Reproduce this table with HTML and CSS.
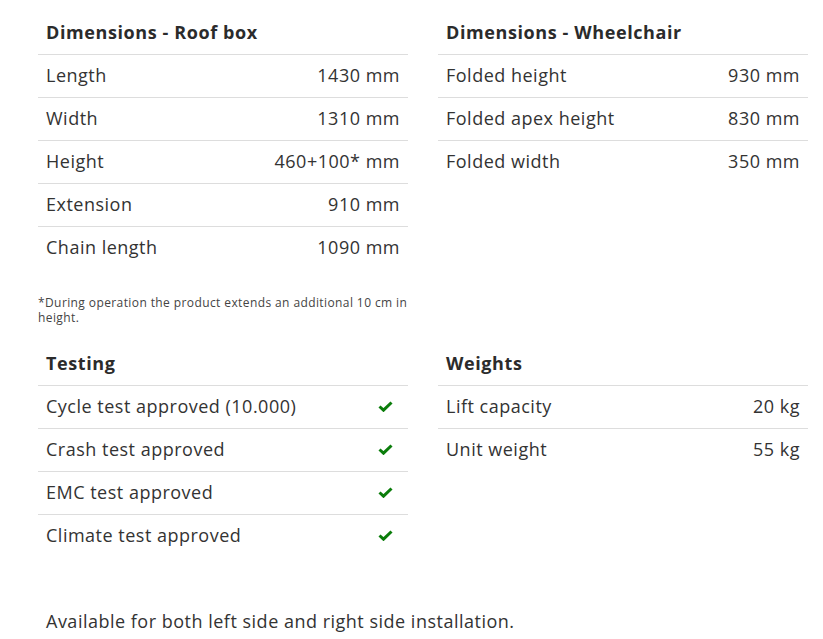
FILE: index.html
```html
<!DOCTYPE html>
<html>
<head>
<meta charset="utf-8">
<link rel="stylesheet" href="styles.css">
</head>
<body>
<div class="page">
  <div class="grid">
    <div class="col">
      <table class="spec">
        <tr class="head"><th colspan="2">Dimensions - Roof box</th></tr>
        <tr><td>Length</td><td class="val">1430 mm</td></tr>
        <tr><td>Width</td><td class="val">1310 mm</td></tr>
        <tr><td>Height</td><td class="val">460+100* mm</td></tr>
        <tr><td>Extension</td><td class="val">910 mm</td></tr>
        <tr><td>Chain length</td><td class="val">1090 mm</td></tr>
      </table>
      <p class="note">*During operation the product extends an additional 10 cm in height.</p>
    </div>
    <div class="col">
      <table class="spec">
        <tr class="head"><th colspan="2">Dimensions - Wheelchair</th></tr>
        <tr><td>Folded height</td><td class="val">930 mm</td></tr>
        <tr><td>Folded apex height</td><td class="val">830 mm</td></tr>
        <tr><td>Folded width</td><td class="val">350 mm</td></tr>
      </table>
    </div>
    <div class="col">
      <table class="spec">
        <tr class="head"><th colspan="2">Testing</th></tr>
        <tr><td>Cycle test approved (10.000)</td><td class="chk"><svg viewBox="0 0 15 11" width="15" height="11"><path d="M1.5 5.5 L5.5 9.2 L13.5 1.5" fill="none" stroke="#0b7d0b" stroke-width="3"/></svg></td></tr>
        <tr><td>Crash test approved</td><td class="chk"><svg viewBox="0 0 15 11" width="15" height="11"><path d="M1.5 5.5 L5.5 9.2 L13.5 1.5" fill="none" stroke="#0b7d0b" stroke-width="3"/></svg></td></tr>
        <tr><td>EMC test approved</td><td class="chk"><svg viewBox="0 0 15 11" width="15" height="11"><path d="M1.5 5.5 L5.5 9.2 L13.5 1.5" fill="none" stroke="#0b7d0b" stroke-width="3"/></svg></td></tr>
        <tr><td>Climate test approved</td><td class="chk"><svg viewBox="0 0 15 11" width="15" height="11"><path d="M1.5 5.5 L5.5 9.2 L13.5 1.5" fill="none" stroke="#0b7d0b" stroke-width="3"/></svg></td></tr>
      </table>
    </div>
    <div class="col">
      <table class="spec">
        <tr class="head"><th colspan="2">Weights</th></tr>
        <tr><td>Lift capacity</td><td class="val">20 kg</td></tr>
        <tr><td>Unit weight</td><td class="val">55 kg</td></tr>
      </table>
    </div>
  </div>
  <p class="avail">Available for both left side and right side installation.</p>
</div>
</body>
</html>
```
FILE: styles.css
```css
html, body {
  margin: 0;
  padding: 0;
  background: #fff;
}
body {
  font-family: "Open Sans", "Liberation Sans", sans-serif;
  color: #333;
}
.page {
  padding: 11px 15px 0 38px;
}
.grid {
  display: grid;
  grid-template-columns: 370px 370px;
  column-gap: 30px;
  row-gap: 17px;
}
.spec {
  width: 100%;
  border-collapse: collapse;
}
.spec th {
  text-align: left;
  font-weight: 700;
  font-size: 18px;
  letter-spacing: 0.6px;
  height: 41px;
  padding: 0 8px 2px;
  vertical-align: middle;
  color: #2b2b2b;
}
.spec td {
  height: 40px;
  border-top: 1px solid #ddd;
  padding: 0 8px 2px;
  font-size: 18px;
  font-weight: 400;
  letter-spacing: 0.5px;
  vertical-align: middle;
}
.spec td.val {
  text-align: right;
}
.spec td.chk {
  text-align: right;
  padding: 0 15px 1px 8px;
  line-height: 0;
}
.note {
  margin: 26px 0 0 0;
  font-size: 12px;
  line-height: 15px;
  letter-spacing: 0.4px;
  color: #444;
}
.avail {
  margin: 52px 0 0 8px;
  font-size: 18px;
  letter-spacing: 0.5px;
}
```
